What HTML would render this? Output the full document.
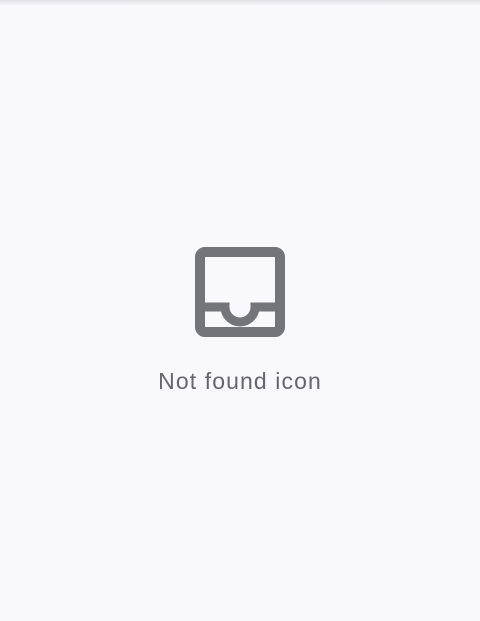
<!DOCTYPE html>
<html><head><style>
html,body{margin:0;padding:0;width:480px;height:621px;background:#f9f8fd;overflow:hidden}
.bar{position:absolute;top:0;left:0;width:480px;height:6px;background:linear-gradient(#e2e1e6,#f9f8fd)}
.t{position:absolute;left:0;width:480px;top:368px;text-align:center;font-family:"Liberation Sans",sans-serif;font-size:23px;letter-spacing:1.1px;color:#65666c}
svg{position:absolute;left:0;top:0}
</style></head><body>
<div class="bar"></div>
<svg width="480" height="621">
<rect x="200" y="252" width="80" height="80" rx="5" fill="none" stroke="#74757b" stroke-width="10"/>
<path d="M200 307 H225 A15 15 0 0 0 255 307 H280" fill="none" stroke="#74757b" stroke-width="9"/>
</svg>
<div class="t">Not found icon</div>
</body></html>
